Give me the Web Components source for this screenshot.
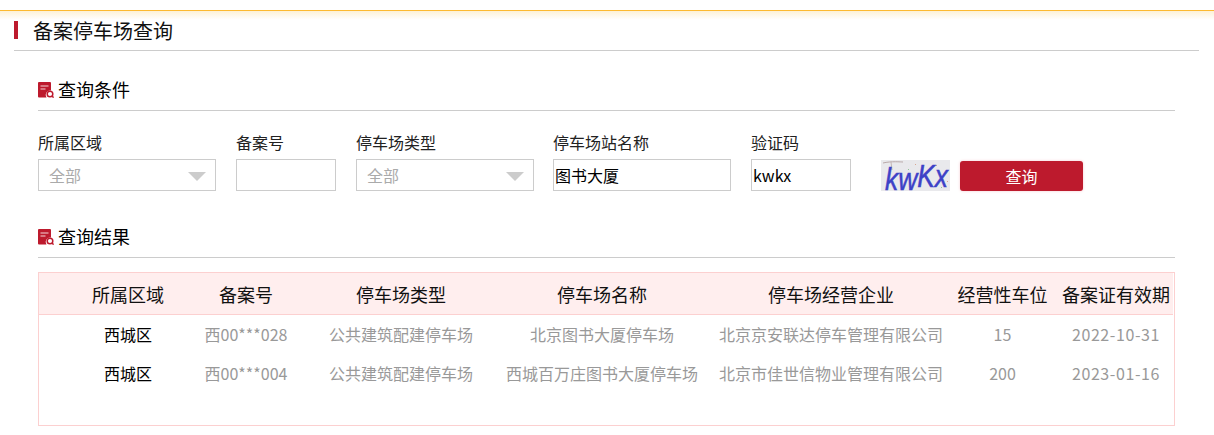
<!DOCTYPE html>
<html lang="zh">
<head>
<meta charset="utf-8">
<title>备案停车场查询</title>
<style>
  html, body { margin: 0; background: #fff; }
  body { font-family: "Noto Sans CJK SC", "Noto Sans", sans-serif; color: #000; overflow: hidden; }
</style>
</head>
<body>
<parking-page>
  <page-title>备案停车场查询</page-title>
  <section-head>查询条件</section-head>
  <search-form></search-form>
  <section-head class="results">查询结果</section-head>
  <result-table></result-table>
</parking-page>

<script>
class ParkingPage extends HTMLElement {
  constructor() {
    super()
    this.attachShadow({ mode: 'open' })
    this.shadowRoot.innerHTML = `
      <style>
        :host { display: block; height: 435px; box-sizing: border-box; padding-top: 10px; }
        .band {
          height: 10px;
          border-top: 1px solid #fdb92f;
          background: linear-gradient(#fdf1d6, #fff);
          box-sizing: border-box;
        }
        .wrap { padding: 0 15px 0 14px; }
      </style>
      <div class="band"></div>
      <div class="wrap"><slot></slot></div>
    `
  }
}

class PageTitle extends HTMLElement {
  constructor() {
    super()
    this.attachShadow({ mode: 'open' })
    this.shadowRoot.innerHTML = `
      <style>
        :host {
          display: flex;
          align-items: center;
          height: 30px;
          border-bottom: 1px solid #ccc;
          font-size: 20px;
          line-height: 22px;
          color: #111;
          margin-bottom: 25px;
        }
        i { width: 4px; height: 18px; background: #bd1a2d; margin: -10px 15px 0 0; }
        span { margin-top: -8px; }
      </style>
      <i></i><span><slot></slot></span>
    `
  }
}

class SectionHead extends HTMLElement {
  constructor() {
    super()
    this.attachShadow({ mode: 'open' })
    this.shadowRoot.innerHTML = `
      <style>
        :host {
          display: flex;
          align-items: center;
          gap: 4px;
          height: 28px;
          padding-bottom: 6px;
          margin: 0 24px;
          border-bottom: 1px solid #ccc;
          font-size: 18px;
          line-height: 24px;
        }
        :host(.results) { margin-top: 32px; }
        svg { width: 16px; height: 16px; flex: none; }
        span { margin-top: -3px; }
      </style>
      <svg viewBox="0 0 16 16">
        <path d="M1 0h11a1 1 0 0 1 1 1v7.5a4.5 4.5 0 0 0-4.5 7H1a1 1 0 0 1-1-1V1a1 1 0 0 1 1-1z" fill="#bd1a2d"/>
        <path d="M2.5 4h8M2.5 7h5" stroke="#f6d5d8" stroke-width="1.2"/>
        <circle cx="12" cy="12" r="2.8" fill="#fff" stroke="#bd1a2d" stroke-width="1.5"/>
        <path d="M14 14l1.6 1.6" stroke="#bd1a2d" stroke-width="1.5"/>
      </svg>
      <span><slot></slot></span>
    `
  }
}

class FormField extends HTMLElement {
  constructor() {
    super()
    this.attachShadow({ mode: 'open' })
    this.shadowRoot.innerHTML = `
      <style>
        :host { display: flex; flex-direction: column; font-size: 16px; }
        label { height: 28px; line-height: 22px; color: #222; white-space: nowrap; }
        .box {
          display: flex;
          align-items: center;
          justify-content: space-between;
          box-sizing: border-box;
          height: 32px;
          border: 1px solid #ccc;
          padding: 0 1px;
          color: #000;
          background: #fff;
          line-height: 20px;
        }
        :host([select]) .box { padding: 0 9px 0 10px; color: #aaa; }
        .arrow {
          display: none;
          width: 0; height: 0;
          margin: 3px 0 0 0;
          border: 9px solid transparent;
          border-bottom-width: 0;
          border-top: 9px solid #ccc;
        }
        :host([select]) .arrow { display: block; }
      </style>
      <label></label>
      <div class="box"><span><slot></slot></span><i class="arrow"></i></div>
    `
  }

  connectedCallback() {
    this.shadowRoot.querySelector('label').textContent = this.getAttribute('label')
    this.style.width = this.getAttribute('w') + 'px'
  }
}

class CaptchaImage extends HTMLElement {
  constructor() {
    super()
    this.attachShadow({ mode: 'open' })
    this.shadowRoot.innerHTML = `
      <style>
        :host { display: block; width: 69px; height: 31px; }
        svg { display: block; overflow: visible; }
      </style>
      <svg width="69" height="31" viewBox="0 0 69 31">
        <rect width="69" height="31" fill="#e9e9ec"/>
        <path d="M2 3C10 1 20 2 22 2" stroke="#b9a9a9" fill="none"/>
        <path d="M10 2l1 8" stroke="#c4b6b6" fill="none"/>
        <g fill="#93c49a"><rect x="27" y="9" width="1" height="1"/><rect x="60" y="27" width="1" height="1"/></g>
        <g fill="#d7a691"><rect x="34" y="4" width="1" height="1"/><rect x="55" y="5" width="1" height="1"/><rect x="66" y="21" width="1" height="1"/></g>
        <text x="4" y="30" dy="0 0 -3 0" textLength="63" lengthAdjust="spacingAndGlyphs"
          fill="#3d41c7" stroke="#3d41c7" stroke-width="0.5"
          font-family="Liberation Sans, sans-serif" font-style="italic" font-size="31">kwKx</text>
      </svg>
    `
  }
}

class RedButton extends HTMLElement {
  constructor() {
    super()
    this.attachShadow({ mode: 'open' })
    this.shadowRoot.innerHTML = `
      <style>
        :host {
          display: flex;
          align-items: center;
          justify-content: center;
          width: 123px;
          height: 30px;
          border-radius: 3px;
          background: #bd1a2d;
          box-shadow: 0 0 3px #f6c9cf;
          color: #fff;
          font-size: 16px;
        }
      </style>
      <slot></slot>
    `
  }
}

class SearchForm extends HTMLElement {
  constructor() {
    super()
    this.attachShadow({ mode: 'open' })
    this.shadowRoot.innerHTML = `
      <style>
        :host {
          display: flex;
          align-items: flex-end;
          height: 80px;
          box-sizing: border-box;
          margin: 0 24px;
          gap: 20px;
        }
        captcha-image { margin: 0 -10px 0 10px; }
        .name { margin-left: -1px; }
      </style>
      <form-field label="所属区域" w="178" select>全部</form-field>
      <form-field label="备案号" w="100"></form-field>
      <form-field label="停车场类型" w="178" select>全部</form-field>
      <form-field class="name" label="停车场站名称" w="178">图书大厦</form-field>
      <form-field label="验证码" w="100">kwkx</form-field>
      <captcha-image></captcha-image>
      <red-button>查询</red-button>
    `
  }
}

const COLUMNS = ['所属区域', '备案号', '停车场类型', '停车场名称', '停车场经营企业', '经营性车位', '备案证有效期']
const ROWS = [
  ['西城区', '西00***028', '公共建筑配建停车场', '北京图书大厦停车场', '北京京安联达停车管理有限公司', '15', '2022-10-31'],
  ['西城区', '西00***004', '公共建筑配建停车场', '西城百万庄图书大厦停车场', '北京市佳世信物业管理有限公司', '200', '2023-01-16']
]

class ResultTable extends HTMLElement {
  constructor() {
    super()
    this.attachShadow({ mode: 'open' })
    const cells = row => row.map(t => `<div>${t}</div>`).join('')
    this.shadowRoot.innerHTML = `
      <style>
        :host {
          display: block;
          box-sizing: border-box;
          height: 154px;
          margin: 14px 24px 0;
          border: 1px solid #fcd0d0;
        }
        .row {
          display: grid;
          grid-template-columns: 100px 136px 174px 228px 230px 113px 114px;
          padding-left: 39px;
          text-align: center;
          white-space: nowrap;
        }
        .row > div { display: flex; align-items: center; justify-content: center; }
        .head {
          height: 42px;
          box-sizing: border-box;
          margin-right: 1px;
          background: #ffeeee;
          border-bottom: 1px solid #fcd0d0;
          font-size: 18px;
          color: #111;
        }
        .body { font-size: 16px; color: #999; height: 39px; box-sizing: border-box; padding-bottom: 2px; }
        .body > div:first-child { color: #000; }
        .body > div:last-child { letter-spacing: 0.6px; }
      </style>
      <div class="row head">${cells(COLUMNS)}</div>
      ${ROWS.map(r => `<div class="row body">${cells(r)}</div>`).join('')}
    `
  }
}

customElements.define('parking-page', ParkingPage)
customElements.define('page-title', PageTitle)
customElements.define('section-head', SectionHead)
customElements.define('form-field', FormField)
customElements.define('captcha-image', CaptchaImage)
customElements.define('red-button', RedButton)
customElements.define('search-form', SearchForm)
customElements.define('result-table', ResultTable)
</script>
</body>
</html>
